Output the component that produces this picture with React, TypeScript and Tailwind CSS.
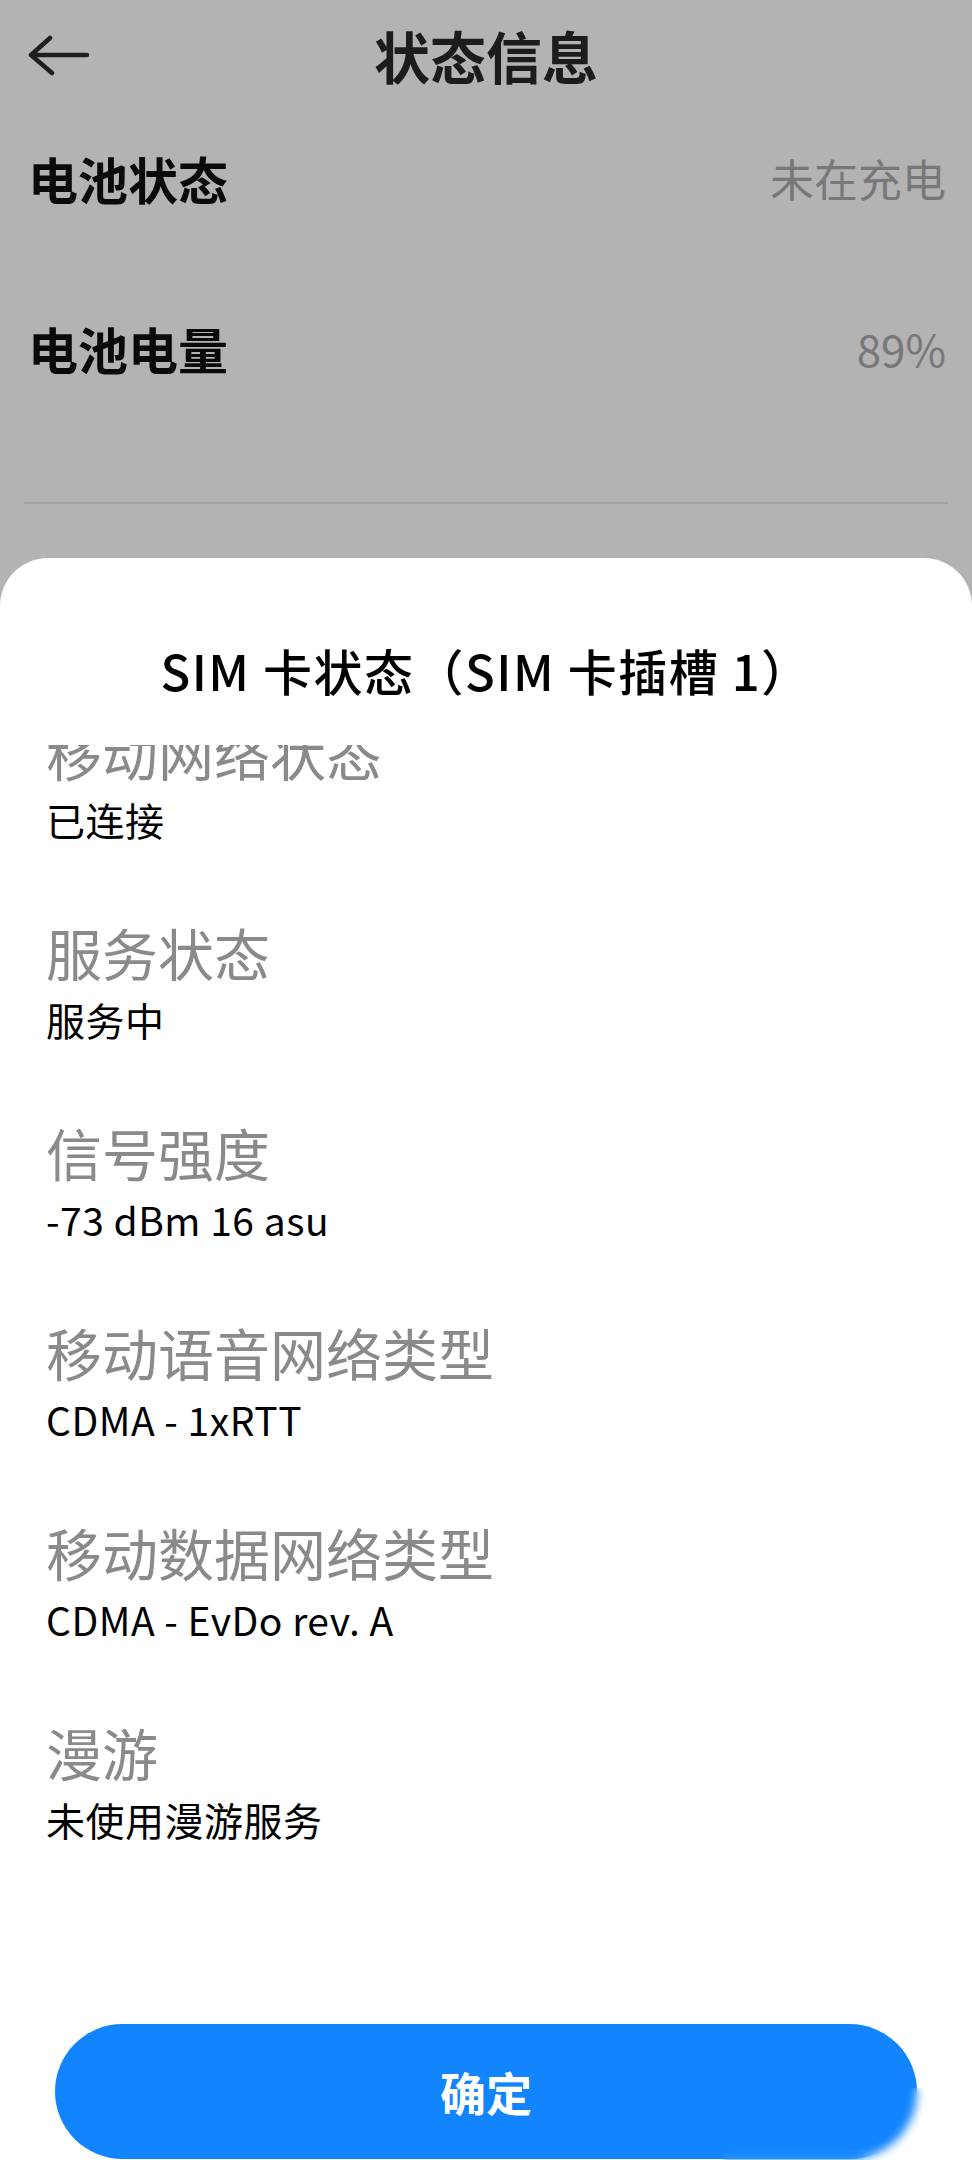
import React from 'react';

const items = [
  { label: '移动网络状态', value: '已连接' },
  { label: '服务状态', value: '服务中' },
  { label: '信号强度', value: '-73 dBm 16 asu' },
  { label: '移动语音网络类型', value: 'CDMA - 1xRTT' },
  { label: '移动数据网络类型', value: 'CDMA - EvDo rev. A' },
  { label: '漫游', value: '未使用漫游服务' },
];

const BackArrow = () => (
  <svg width="64" height="44" viewBox="0 0 64 44" fill="none">
    <path
      d="M22 5 L3 22 L24 40 M3 22 H59"
      stroke="#1f1f1f"
      strokeWidth="4.5"
      strokeLinecap="round"
      strokeLinejoin="round"
    />
  </svg>
);

export default function App() {
  return (
    <div className="relative flex h-[2160px] w-full flex-col overflow-hidden bg-[#b3b3b3] font-['Noto_Sans_CJK_SC',sans-serif]">
      {/* page behind the sheet (dimmed) */}
      <header className="grid h-[110px] grid-cols-[1fr_auto_1fr] items-center px-[28px]">
        <div className="justify-self-start">
          <BackArrow />
        </div>
        <h1 className="text-[56px] font-bold leading-none text-[#1c1c1c]">状态信息</h1>
        <div />
      </header>

      <div className="flex flex-col gap-[102px] px-[26px] pt-[34px] pl-[28px]">
        <div className="flex items-center justify-between leading-[68px]">
          <span className="text-[50px] font-bold text-[#0a0a0a]">电池状态</span>
          <span className="text-[44px] text-[#787878]">未在充电</span>
        </div>
        <div className="flex items-center justify-between leading-[68px]">
          <span className="text-[50px] font-bold text-[#0a0a0a]">电池电量</span>
          <span className="text-[44px] text-[#787878]">89%</span>
        </div>
      </div>

      <div className="mx-[24px] mt-[120px] h-[2px] bg-[#a3a3a3]" />

      {/* bottom sheet */}
      <div className="mt-[54px] flex flex-1 flex-col rounded-t-[48px] bg-white">
        <h2 className="pt-[82px] text-center text-[49px] font-medium leading-[60px] tracking-[1.5px] text-black">
          SIM 卡状态（SIM 卡插槽 1）
        </h2>

        <div className="mt-[45px] h-[1279px] overflow-hidden px-[46px]">
          <div className="-mt-[31px] flex flex-col gap-[66px]">
            {items.map((it) => (
              <div key={it.label} className="flex flex-col">
                <span className="text-[56px] font-normal leading-[76px] text-[#8a8a8a]">{it.label}</span>
                <span className="text-[39px] leading-[58px] tracking-[0.5px] text-black">{it.value}</span>
              </div>
            ))}
          </div>
        </div>

        <button className="mx-[55px] flex h-[135px] items-center justify-center rounded-full bg-[#1184fe] text-[46px] font-bold text-white">
          确定
        </button>
      </div>

      <div className="absolute bottom-0 right-0 h-[72px] w-[249px] backdrop-blur-[5px]" />
    </div>
  );
}
